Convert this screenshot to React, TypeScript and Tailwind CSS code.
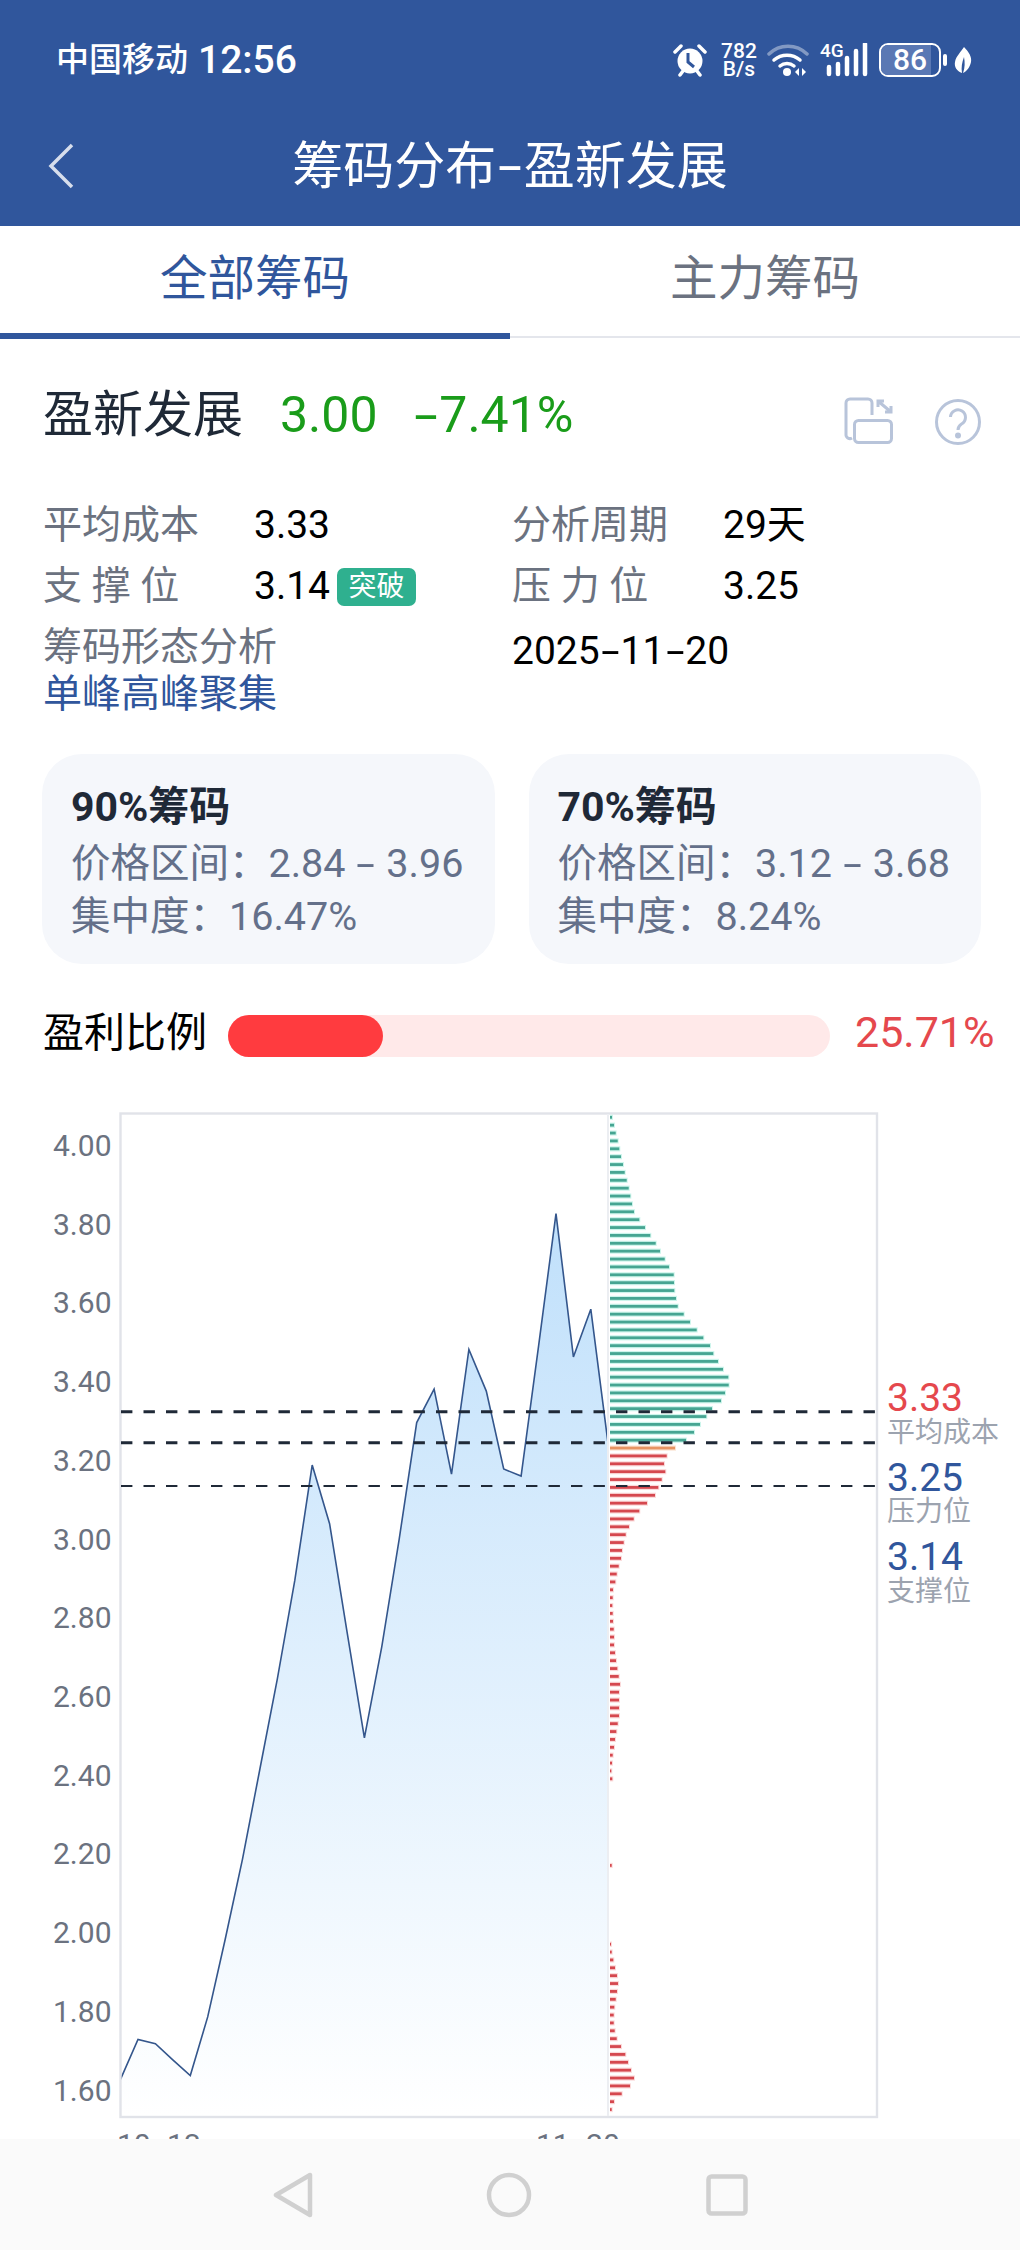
import React from "react";

const BLUE = "#30569c";

// closing prices for the 29 trading days on the chart
const PRICES = [
  1.628, 1.729, 1.718, 1.677, 1.637, 1.786, 1.982, 2.187, 2.416, 2.644, 2.895, 3.188, 3.039, 2.765, 2.495,
  2.727, 3.0, 3.296, 3.381, 3.165, 3.482, 3.376, 3.178, 3.16, 3.491, 3.827, 3.463, 3.584, 3.24,
];

// chip widths from the top price bucket down
const HOLD_CHIPS = [
  2, 4, 5.7, 7.7, 9.3, 11, 13, 14.7, 16.7, 18.7, 20.3, 22, 24, 29.3, 35, 40.3, 45.7, 50, 54.7, 59, 63.7, 64, 64.3,
  66, 67.7, 73.7, 80, 86.7, 93.3, 100, 103.3, 108, 113, 118.3, 118.7, 115, 111, 102, 96.3, 90, 84, 76,
];
const CURRENT_CHIP = 65;
const PROFIT_CHIPS = [
  56.7, 54, 55.3, 51.7, 48.3, 45, 37, 29.3, 23.7, 19, 15.7, 13.7, 12, 11, 8.7, 6.7, 5.3, 3, 2.7, 2.3, 2.7, 3, 3.7, 4,
  4, 5, 6, 7.3, 8.7, 10, 9, 9, 9, 9, 7.7, 6.3, 5, 4, 2.7, 2, 1.3, 2.3, 0, 0, 0, 0, 0, 0, 0, 0, 0, 0, 1.7, 0, 0, 0, 0,
  0, 0, 0, 0, 0, 1, 1.7, 3.3, 5, 7, 8, 7, 5.7, 4.3, 3.7, 3.7, 4.7, 6.7, 11, 15.3, 18, 21, 24, 20, 11.7, 4, 1.7,
];

const AXIS_TICKS = ["4.00", "3.80", "3.60", "3.40", "3.20", "3.00", "2.80", "2.60", "2.40", "2.20", "2.00", "1.80", "1.60"];

const priceY = (p: number) => 1145.5 + (4 - p) * 393.6;
const dayX = (i: number) => 120.6 + i * 17.415;

// the app's font has a much longer hyphen than Roboto
function Dash() {
  return <span className="inline-block mx-[0.13em] scale-x-[1.7]">-</span>;
}

function StatusIcons() {
  return (
    <div className="flex items-center text-white">
      {/* alarm */}
      <svg width="34" height="36" viewBox="0 0 34 36" className="mr-[13px]">
        <circle cx="17" cy="19" r="12.5" fill="white" />
        <path d="M15 11v9l6 5" fill="none" stroke={BLUE} strokeWidth="3" />
        <path d="M2 10l6-6M32 10l-6-6M7 33l3-4M27 33l-3-4" stroke="white" strokeWidth="3.5" strokeLinecap="round" />
      </svg>
      <div className="flex flex-col items-center w-[38px] text-[21px] leading-[18px] font-medium mr-[9px]">
        <span>782</span>
        <span>B/s</span>
      </div>
      {/* wifi */}
      <svg width="42" height="34" viewBox="0 0 42 34" className="mr-[11px]">
        <path d="M2 11a27 27 0 0 1 38 0" fill="none" stroke="white" strokeOpacity="0.4" strokeWidth="3.5" strokeLinecap="round" />
        <path d="M7 17a20 20 0 0 1 26 0" fill="none" stroke="white" strokeWidth="3.5" strokeLinecap="round" />
        <path d="M13 23a11 11 0 0 1 14 0" fill="none" stroke="white" strokeWidth="3.5" strokeLinecap="round" />
        <circle cx="20" cy="29" r="4" fill="white" />
        <path d="M32 25v8l-4-4zM35 25v8l4-4z" fill="white" />
      </svg>
      {/* 4G and signal */}
      <div className="relative w-[48px] h-[34px] mr-[11px]">
        <span className="absolute left-0 top-[-1px] text-[19px] leading-[18px] font-medium">4G</span>
        <svg width="48" height="34" viewBox="0 0 48 34" className="absolute left-0 top-0">
          <path d="M9 24v7M18 21v10M27 15v16M36 8v23M45 1v30" stroke="white" strokeWidth="4.5" strokeLinecap="round" />
        </svg>
      </div>
      {/* battery */}
      <div className="relative w-[62px] h-[34px] rounded-[9px] border-[2.5px] border-white overflow-hidden flex items-center justify-center mr-[2px]">
        <div className="absolute left-0 top-0 bottom-0 w-[86%] bg-[#5a78b4]" />
        <span className="relative text-[30px] leading-none font-medium">86</span>
      </div>
      <div className="w-[4px] h-[12px] rounded-[2px] bg-white mr-[7px]" />
      {/* leaf */}
      <svg width="18" height="26" viewBox="0 0 18 26">
        <path d="M10 0c5 5 8 10 7 15-1 5-4 9-8 11 2-5 2-11 1-16-2 5-3 11-2 16C3 24 0 20 1 15 2 9 7 5 10 0z" fill="white" />
      </svg>
    </div>
  );
}

function InfoRow({ label, children }: { label: string; children: React.ReactNode }) {
  return (
    <div className="flex items-center h-[61px] text-[39px]">
      <span className="w-[211px] text-[#6b7280] whitespace-pre">{label}</span>
      <div className="flex items-center text-black">{children}</div>
    </div>
  );
}

function ChipCard({ title, low, high, degree }: { title: string; low: string; high: string; degree: string }) {
  return (
    <div className="h-[210px] rounded-[40px] bg-[#f5f7fb] pt-[26px] pl-[29px] text-[39.5px] text-[#64708a]">
      <div className="h-[54px] leading-[54px] mb-[3px] text-[41px] font-bold text-[#1f2937]">{title}</div>
      <div className="h-[53px] leading-[53px]">
        价格区间：{low} <Dash /> {high}
      </div>
      <div className="h-[53px] leading-[53px]">集中度：{degree}</div>
    </div>
  );
}

function Bar({ index, width, color, glow }: { index: number; width: number; color: string; glow: string }) {
  if (!width) return null;
  const y = 1117.3 + index * 7.875;
  return (
    <g>
      <rect x="610" y={y - 2.6} width={width + 1} height="5.2" fill={glow} />
      <rect x="610" y={y - 1.4} width={width} height="2.8" fill={color} />
    </g>
  );
}

function ChipChart() {
  const line = PRICES.map((p, i) => `${dayX(i).toFixed(1)},${priceY(p).toFixed(1)}`).join(" ");
  return (
    <svg width="1020" height="1140" viewBox="0 1062 1020 1140" className="block">
      <defs>
        <linearGradient id="areaFill" x1="0" y1="1213" x2="0" y2="2116" gradientUnits="userSpaceOnUse">
          <stop offset="0%" stopColor="#c0e0fb" />
          <stop offset="100%" stopColor="#ffffff" />
        </linearGradient>
      </defs>

      <polygon points={`120.6,2116 ${line} ${dayX(28)},2116`} fill="url(#areaFill)" />
      <polyline points={line} fill="none" stroke="#34568c" strokeWidth="1.6" />

      {/* plot frame */}
      <rect x="120.5" y="1113.5" width="756.5" height="1003.5" fill="none" stroke="#e1e3e9" strokeWidth="2.4" />
      <line x1="608" y1="1114" x2="608" y2="2116" stroke="#eceef2" strokeWidth="2" />

      {HOLD_CHIPS.map((w, i) => (
        <Bar key={i} index={i} width={w} color="#46a592" glow="#cdf5ec" />
      ))}
      <Bar index={42} width={CURRENT_CHIP} color="#e79463" glow="#fbe3d3" />
      {PROFIT_CHIPS.map((w, i) => (
        <Bar key={i} index={43 + i} width={w} color="#d5484f" glow="#fbdada" />
      ))}

      {/* avg cost, pressure, support */}
      <line x1="121" y1="1411.7" x2="876" y2="1411.7" stroke="#1f2937" strokeWidth="3" strokeDasharray="11.4 11.1" />
      <line x1="121" y1="1442.7" x2="876" y2="1442.7" stroke="#1f2937" strokeWidth="3" strokeDasharray="11.4 11.1" />
      <line x1="121" y1="1486" x2="876" y2="1486" stroke="#1f2937" strokeWidth="2" strokeDasharray="11.4 11.1" />

      {AXIS_TICKS.map((t, i) => (
        <text key={t} x="111.5" y={1145.5 + i * 78.72 + 10.5} textAnchor="end" fontSize="30" fill="#6b7280">
          {t}
        </text>
      ))}
      <text x="117" y="2155" fontSize="30" fill="#6b7280">
        10<tspan dx="4">-</tspan>
        <tspan dx="4">13</tspan>
      </text>
      <text x="536" y="2155" fontSize="30" fill="#6b7280">
        11<tspan dx="4">-</tspan>
        <tspan dx="4">20</tspan>
      </text>

      <text x="887" y="1411" fontSize="39" fill="#e5484d">3.33</text>
      <text x="887" y="1442" fontSize="28" fill="#9ca3af">平均成本</text>
      <text x="887" y="1491" fontSize="39" fill={BLUE}>3.25</text>
      <text x="887" y="1521" fontSize="28" fill="#9ca3af">压力位</text>
      <text x="887" y="1570" fontSize="39" fill={BLUE}>3.14</text>
      <text x="887" y="1601" fontSize="28" fill="#9ca3af">支撑位</text>
    </svg>
  );
}

export default function App() {
  return (
    <div className="relative w-[1020px] h-[2250px] overflow-hidden bg-white font-['Roboto','Noto_Sans_CJK_SC',sans-serif]">
      {/* app bar */}
      <header className="h-[226px] bg-[#30569c] text-white">
        <div className="h-[120px] pl-[56px] pr-[48px] flex items-center justify-between">
          <div className="flex items-center">
            <span className="text-[33px] font-medium mr-[10px]">中国移动</span>
            <span className="text-[39px] font-medium">12:56</span>
          </div>
          <StatusIcons />
        </div>
        <div className="h-[88px] flex items-center pl-[46px] pr-[46px] pt-[4px]">
          <svg width="30" height="48" viewBox="0 0 30 48">
            <path d="M26 3L5 24l21 21" fill="none" stroke="#d7deec" strokeWidth="3.5" />
          </svg>
          <h1 className="flex-1 text-center text-[51px] leading-none font-normal">
            筹码分布<Dash />盈新发展
          </h1>
          <div className="w-[30px]" />
        </div>
      </header>

      {/* tabs */}
      <div className="grid grid-cols-2 h-[112px] border-b-2 border-[#e4e6ec] text-[47.5px]">
        <div className="flex items-center justify-center h-[113px] border-b-[6px] border-[#30569c] text-[#30569c]">全部筹码</div>
        <div className="flex items-center justify-center h-[107px] text-[#6b7280]">主力筹码</div>
      </div>

      <section className="px-[43px] pt-[47px]">
        <div className="flex items-center h-[60px] text-[50px]">
          <span className="text-[#1f2937]">盈新发展</span>
          <span className="ml-[37px] text-[#1a9c1a]">3.00</span>
          <span className="ml-[35px] text-[#1a9c1a]">
            <Dash />7.41%
          </span>
          <div className="ml-auto mr-[-4px] mt-[13px] flex items-center gap-[35px]">
            <svg width="60" height="60" viewBox="0 0 60 60" fill="none" stroke="#b8c4da" strokeWidth="3">
              <path d="M32 23V11a4 4 0 0 0-4-4H10a4 4 0 0 0-4 4v31a4 4 0 0 0 6 4" />
              <rect x="14.5" y="28.5" width="37" height="22" rx="4" />
              <path d="M38 9l13 11M38 15V9h6M51 14v6h-6" />
            </svg>
            <svg width="46" height="46" viewBox="0 0 46 46" fill="none" stroke="#b8c4da" strokeWidth="3">
              <circle cx="23" cy="23" r="21.5" />
              <path d="M15.5 18a7.5 7.5 0 1 1 11 7c-2.5 1.6-3.5 3-3.5 6" />
              <circle cx="23" cy="36.5" r="1.5" fill="#b8c4da" />
            </svg>
          </div>
        </div>

        <div className="grid grid-cols-[469px_1fr] mt-[50px]">
          <InfoRow label="平均成本">3.33</InfoRow>
          <InfoRow label="分析周期">29天</InfoRow>
          <InfoRow label="支 撑 位">
            3.14
            <span className="ml-[7px] flex items-center justify-center w-[79px] h-[38px] rounded-[7px] bg-[#2fb08f] text-white text-[28px]">突破</span>
          </InfoRow>
          <InfoRow label="压 力 位">3.25</InfoRow>
          <div className="text-[39px] leading-[47px] pt-[7px]">
            <div className="text-[#6b7280]">筹码形态分析</div>
            <div className="text-[#30569c]">单峰高峰聚集</div>
          </div>
          <div className="text-[39px] leading-[47px] pt-[11px] text-black">
            2025<Dash />11<Dash />20
          </div>
        </div>

        <div className="grid grid-cols-2 gap-[34px] mt-[36px] ml-[-1px] mr-[-4px]">
          <ChipCard title="90%筹码" low="2.84" high="3.96" degree="16.47%" />
          <ChipCard title="70%筹码" low="3.12" high="3.68" degree="8.24%" />
        </div>

        <div className="flex items-center h-[60px] mt-[38px]">
          <span className="w-[185px] shrink-0 mt-[4px] text-[41px] text-black">盈利比例</span>
          <div className="w-[602px] h-[42px] shrink-0 mt-[8px] rounded-full bg-[#ffe9e9]">
            <div className="w-[155px] h-full rounded-full bg-[#ff3b3f]" />
          </div>
          <span className="ml-[25px] shrink-0 text-[43px] text-[#e5484d]">25.71%</span>
        </div>
      </section>

      <ChipChart />

      {/* system nav bar */}
      <nav className="absolute left-0 right-0 bottom-0 h-[111px] bg-[#fafafa]">
        <div className="flex items-center h-full pl-[272px]">
          <svg width="42" height="46" viewBox="0 0 42 46" fill="none" stroke="#d0d0d0" strokeWidth="4.5" strokeLinejoin="round">
            <path d="M38 3v40L4 23z" />
          </svg>
          <svg width="46" height="46" viewBox="0 0 46 46" fill="none" stroke="#d0d0d0" strokeWidth="4.5" className="ml-[172px]">
            <circle cx="23" cy="23" r="20" />
          </svg>
          <svg width="42" height="42" viewBox="0 0 42 42" fill="none" stroke="#d0d0d0" strokeWidth="4.5" className="ml-[174px]">
            <rect x="2.5" y="2.5" width="37" height="37" rx="3" />
          </svg>
        </div>
      </nav>
    </div>
  );
}
